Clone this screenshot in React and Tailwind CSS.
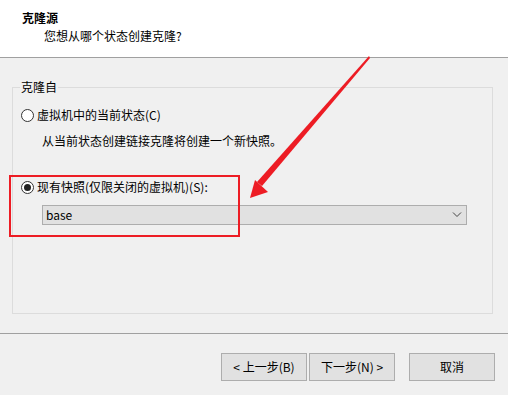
import React from "react";

const font = { fontFamily: '"Microsoft YaHei","Noto Sans CJK SC","Noto Sans",sans-serif' };

function Radio({ checked }) {
  return (
    <span className="w-[13px] h-[13px] rounded-full border border-[#333333] bg-white flex items-center justify-center shrink-0">
      {checked && <span className="w-[7px] h-[7px] rounded-full bg-[#222222]" />}
    </span>
  );
}

function Btn({ children }) {
  return (
    <div className="w-[86px] h-[28px] border border-[#adadad] bg-[#e1e1e1] flex items-center justify-center text-[12px] text-black">
      {children}
    </div>
  );
}

export default function App() {
  return (
    <div className="relative w-[508px] h-[395px] bg-[#f0f0f0] overflow-hidden text-black" style={font}>
      <div className="h-[58px] bg-white border-b border-[#a0a0a0] pt-[9px] pl-[22px]">
        <div className="text-[12px] font-bold leading-[18px]">克隆源</div>
        <div className="text-[12px] leading-[18px] pl-[22px]">您想从哪个状态创建克隆?</div>
      </div>
      <div className="h-[275px] pt-[29px] pl-[12px] pr-[15px]">
        <div className="relative w-[481px] h-[227px] border border-[#dcdcdc]">
          <div className="absolute -top-[10px] left-[7px] bg-[#f0f0f0] px-[1px] text-[12px] leading-[18px]">克隆自</div>
          <div className="pt-[18px] pl-[8px] flex flex-col">
            <div className="flex items-center gap-[3px] h-[18px] text-[12px]">
              <Radio />
              <span>虚拟机中的当前状态(C)</span>
            </div>
            <div className="pl-[21px] mt-[8px] text-[12px] leading-[18px]">从当前状态创建链接克隆将创建一个新快照。</div>
            <div className="flex items-center gap-[3px] h-[18px] text-[12px] mt-[28px]">
              <Radio checked />
              <span>现有快照(仅限关闭的虚拟机)(S):</span>
            </div>
            <div className="ml-[21px] mt-[9px] w-[425px] h-[20px] border border-[#adadad] bg-[#e1e1e1] flex items-center justify-between pl-[3px] pr-[4px] text-[12px]">
              <span>base</span>
              <svg width="10" height="6" viewBox="0 0 10 6"><path d="M1 0.5 L5 4.5 L9 0.5" fill="none" stroke="#444" strokeWidth="1" /></svg>
            </div>
          </div>
        </div>
      </div>
      <div className="border-t border-[#a0a0a0] h-[62px] flex items-start justify-end pt-[19px] pr-[13px]">
        <div className="flex gap-[2px]">
          <Btn>&lt; 上一步(B)</Btn>
          <Btn>下一步(N) &gt;</Btn>
        </div>
        <div className="ml-[14px]"><Btn>取消</Btn></div>
      </div>
      <div className="absolute left-[9px] top-[175px] w-[231px] h-[62px] border-2 border-[#ed1c24]" />
      <svg className="absolute left-0 top-0" width="508" height="395" viewBox="0 0 508 395">
        <polygon points="369,56 370,58 262,186 257,182" fill="#ed1c24" />
        <polygon points="250,198 255,180 268,192" fill="#ed1c24" />
      </svg>
    </div>
  );
}
